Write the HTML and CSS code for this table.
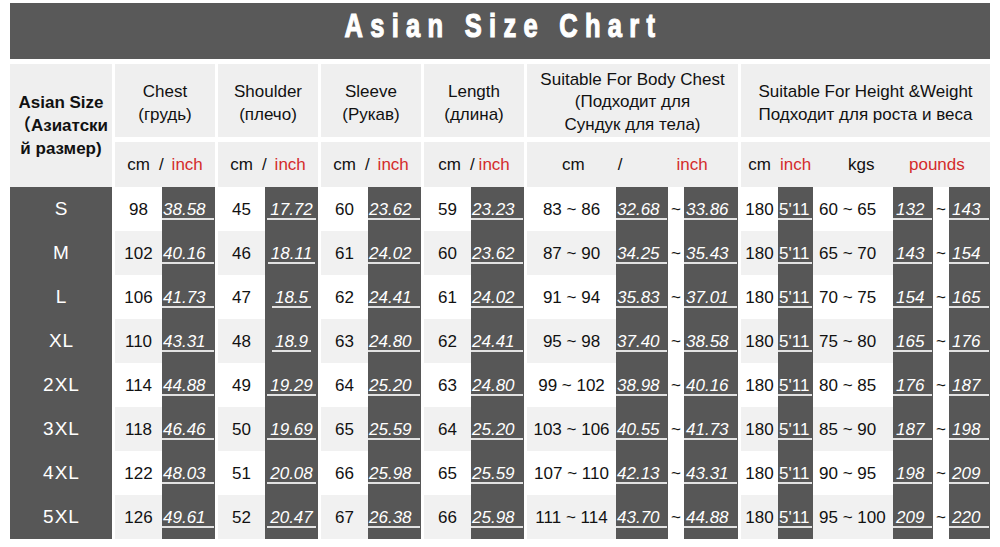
FILE: index.html
```html
<!DOCTYPE html>
<html lang="en">
<head>
<meta charset="utf-8">
<title>Asian Size Chart</title>
<link rel="stylesheet" href="styles.css">
</head>
<body>
<div class="page">
  <div class="title"><span class="title-text">Asian Size Chart</span></div>

  <div class="head">
    <div class="hsize">Asian Size<br>（Азиатски<br>й размер)</div>
    <div class="hgrp std">
      <div class="h1">Chest<br>(грудь)</div>
      <div class="h2"><span>cm</span><span class="sl">/</span><span class="red">inch</span></div>
    </div>
    <div class="hgrp std">
      <div class="h1">Shoulder<br>(плечо)</div>
      <div class="h2"><span>cm</span><span class="sl">/</span><span class="red">inch</span></div>
    </div>
    <div class="hgrp std">
      <div class="h1">Sleeve<br>(Рукав)</div>
      <div class="h2"><span>cm</span><span class="sl">/</span><span class="red">inch</span></div>
    </div>
    <div class="hgrp std">
      <div class="h1">Length<br>(длина)</div>
      <div class="h2"><span>cm</span><span class="sl tight">/</span><span class="red">inch</span></div>
    </div>
    <div class="hgrp bc">
      <div class="h1 three">Suitable For Body Chest<br>(Подходит для<br>Сундук для тела)</div>
      <div class="h2 bc-units"><span class="bu-cm">cm</span><span class="bu-sl">/</span><span class="bu-in red">inch</span></div>
    </div>
    <div class="hgrp hw">
      <div class="h1">Suitable For Height &amp;Weight<br>Подходит для роста и веса</div>
      <div class="h2 hw-units"><span class="hu-cm">cm</span><span class="hu-ft red">inch</span><span class="hu-kg">kgs</span><span class="hu-lb red">pounds</span></div>
    </div>
  </div>

  <div class="rows">
    <div class="row">
      <div class="c size">S</div>
      <div class="grp"><div class="c cm lt">98</div><div class="c in dk"><span class="u">38.58</span></div></div>
      <div class="grp"><div class="c cm lt">45</div><div class="c in dk ctr"><span class="u">17.72</span></div></div>
      <div class="grp"><div class="c cm lt">60</div><div class="c in dk"><span class="u">23.62</span></div></div>
      <div class="grp"><div class="c cm lt">59</div><div class="c in dk"><span class="u">23.23</span></div></div>
      <div class="grp"><div class="c bcm lt">83 ~ 86</div><div class="c bi1 dk"><span class="u">32.68</span></div><div class="c tl">~</div><div class="c bi2 dk"><span class="u">33.86</span></div></div>
      <div class="grp"><div class="c hcm lt">180</div><div class="c hft dk up"><span class="u">5'11</span></div><div class="c kg lt">60 ~ 65</div><div class="c lb1 dk"><span class="u">132</span></div><div class="c tl">~</div><div class="c lb2 dk"><span class="u">143</span></div></div>
    </div>
    <div class="row alt">
      <div class="c size">M</div>
      <div class="grp"><div class="c cm lt">102</div><div class="c in dk"><span class="u">40.16</span></div></div>
      <div class="grp"><div class="c cm lt">46</div><div class="c in dk ctr"><span class="u">18.11</span></div></div>
      <div class="grp"><div class="c cm lt">61</div><div class="c in dk"><span class="u">24.02</span></div></div>
      <div class="grp"><div class="c cm lt">60</div><div class="c in dk"><span class="u">23.62</span></div></div>
      <div class="grp"><div class="c bcm lt">87 ~ 90</div><div class="c bi1 dk"><span class="u">34.25</span></div><div class="c tl">~</div><div class="c bi2 dk"><span class="u">35.43</span></div></div>
      <div class="grp"><div class="c hcm lt">180</div><div class="c hft dk up"><span class="u">5'11</span></div><div class="c kg lt">65 ~ 70</div><div class="c lb1 dk"><span class="u">143</span></div><div class="c tl">~</div><div class="c lb2 dk"><span class="u">154</span></div></div>
    </div>
    <div class="row">
      <div class="c size">L</div>
      <div class="grp"><div class="c cm lt">106</div><div class="c in dk"><span class="u">41.73</span></div></div>
      <div class="grp"><div class="c cm lt">47</div><div class="c in dk ctr"><span class="u">18.5</span></div></div>
      <div class="grp"><div class="c cm lt">62</div><div class="c in dk"><span class="u">24.41</span></div></div>
      <div class="grp"><div class="c cm lt">61</div><div class="c in dk"><span class="u">24.02</span></div></div>
      <div class="grp"><div class="c bcm lt">91 ~ 94</div><div class="c bi1 dk"><span class="u">35.83</span></div><div class="c tl">~</div><div class="c bi2 dk"><span class="u">37.01</span></div></div>
      <div class="grp"><div class="c hcm lt">180</div><div class="c hft dk up"><span class="u">5'11</span></div><div class="c kg lt">70 ~ 75</div><div class="c lb1 dk"><span class="u">154</span></div><div class="c tl">~</div><div class="c lb2 dk"><span class="u">165</span></div></div>
    </div>
    <div class="row alt">
      <div class="c size">XL</div>
      <div class="grp"><div class="c cm lt">110</div><div class="c in dk"><span class="u">43.31</span></div></div>
      <div class="grp"><div class="c cm lt">48</div><div class="c in dk ctr"><span class="u">18.9</span></div></div>
      <div class="grp"><div class="c cm lt">63</div><div class="c in dk"><span class="u">24.80</span></div></div>
      <div class="grp"><div class="c cm lt">62</div><div class="c in dk"><span class="u">24.41</span></div></div>
      <div class="grp"><div class="c bcm lt">95 ~ 98</div><div class="c bi1 dk"><span class="u">37.40</span></div><div class="c tl">~</div><div class="c bi2 dk"><span class="u">38.58</span></div></div>
      <div class="grp"><div class="c hcm lt">180</div><div class="c hft dk up"><span class="u">5'11</span></div><div class="c kg lt">75 ~ 80</div><div class="c lb1 dk"><span class="u">165</span></div><div class="c tl">~</div><div class="c lb2 dk"><span class="u">176</span></div></div>
    </div>
    <div class="row">
      <div class="c size">2XL</div>
      <div class="grp"><div class="c cm lt">114</div><div class="c in dk"><span class="u">44.88</span></div></div>
      <div class="grp"><div class="c cm lt">49</div><div class="c in dk ctr"><span class="u">19.29</span></div></div>
      <div class="grp"><div class="c cm lt">64</div><div class="c in dk"><span class="u">25.20</span></div></div>
      <div class="grp"><div class="c cm lt">63</div><div class="c in dk"><span class="u">24.80</span></div></div>
      <div class="grp"><div class="c bcm lt">99 ~ 102</div><div class="c bi1 dk"><span class="u">38.98</span></div><div class="c tl">~</div><div class="c bi2 dk"><span class="u">40.16</span></div></div>
      <div class="grp"><div class="c hcm lt">180</div><div class="c hft dk up"><span class="u">5'11</span></div><div class="c kg lt">80 ~ 85</div><div class="c lb1 dk"><span class="u">176</span></div><div class="c tl">~</div><div class="c lb2 dk"><span class="u">187</span></div></div>
    </div>
    <div class="row alt">
      <div class="c size">3XL</div>
      <div class="grp"><div class="c cm lt">118</div><div class="c in dk"><span class="u">46.46</span></div></div>
      <div class="grp"><div class="c cm lt">50</div><div class="c in dk ctr"><span class="u">19.69</span></div></div>
      <div class="grp"><div class="c cm lt">65</div><div class="c in dk"><span class="u">25.59</span></div></div>
      <div class="grp"><div class="c cm lt">64</div><div class="c in dk"><span class="u">25.20</span></div></div>
      <div class="grp"><div class="c bcm lt">103 ~ 106</div><div class="c bi1 dk"><span class="u">40.55</span></div><div class="c tl">~</div><div class="c bi2 dk"><span class="u">41.73</span></div></div>
      <div class="grp"><div class="c hcm lt">180</div><div class="c hft dk up"><span class="u">5'11</span></div><div class="c kg lt">85 ~ 90</div><div class="c lb1 dk"><span class="u">187</span></div><div class="c tl">~</div><div class="c lb2 dk"><span class="u">198</span></div></div>
    </div>
    <div class="row">
      <div class="c size">4XL</div>
      <div class="grp"><div class="c cm lt">122</div><div class="c in dk"><span class="u">48.03</span></div></div>
      <div class="grp"><div class="c cm lt">51</div><div class="c in dk ctr"><span class="u">20.08</span></div></div>
      <div class="grp"><div class="c cm lt">66</div><div class="c in dk"><span class="u">25.98</span></div></div>
      <div class="grp"><div class="c cm lt">65</div><div class="c in dk"><span class="u">25.59</span></div></div>
      <div class="grp"><div class="c bcm lt">107 ~ 110</div><div class="c bi1 dk"><span class="u">42.13</span></div><div class="c tl">~</div><div class="c bi2 dk"><span class="u">43.31</span></div></div>
      <div class="grp"><div class="c hcm lt">180</div><div class="c hft dk up"><span class="u">5'11</span></div><div class="c kg lt">90 ~ 95</div><div class="c lb1 dk"><span class="u">198</span></div><div class="c tl">~</div><div class="c lb2 dk"><span class="u">209</span></div></div>
    </div>
    <div class="row alt">
      <div class="c size">5XL</div>
      <div class="grp"><div class="c cm lt">126</div><div class="c in dk"><span class="u">49.61</span></div></div>
      <div class="grp"><div class="c cm lt">52</div><div class="c in dk ctr"><span class="u">20.47</span></div></div>
      <div class="grp"><div class="c cm lt">67</div><div class="c in dk"><span class="u">26.38</span></div></div>
      <div class="grp"><div class="c cm lt">66</div><div class="c in dk"><span class="u">25.98</span></div></div>
      <div class="grp"><div class="c bcm lt">111 ~ 114</div><div class="c bi1 dk"><span class="u">43.70</span></div><div class="c tl">~</div><div class="c bi2 dk"><span class="u">44.88</span></div></div>
      <div class="grp"><div class="c hcm lt">180</div><div class="c hft dk up"><span class="u">5'11</span></div><div class="c kg lt">95 ~ 100</div><div class="c lb1 dk"><span class="u">209</span></div><div class="c tl">~</div><div class="c lb2 dk"><span class="u">220</span></div></div>
    </div>
  </div>
</div>
</body>
</html>
```

FILE: styles.css
```css
html, body {
  margin: 0;
  padding: 0;
  background: #ffffff;
}

body {
  font-family: "Liberation Sans", Arial, "Noto Sans CJK SC", sans-serif;
  color: #111111;
}

.page {
  width: 980px;
  padding: 3px 10px 0 10px;
}

/* ---------- title ---------- */
.title {
  height: 56px;
  background: #595959;
  text-align: center;
  overflow: hidden;
}

.title-text {
  display: inline-block;
  padding-top: 6px;
  padding-left: 9.6px;
  font-weight: bold;
  font-size: 33.5px;
  line-height: 33.5px;
  letter-spacing: 9.6px;
  color: #ffffff;
  -webkit-text-stroke: 1.2px #ffffff;
  transform: scaleX(0.76);
  white-space: nowrap;
}

/* ---------- header ---------- */
.head {
  display: flex;
  gap: 3px;
  margin-top: 5px;
}

.hsize {
  width: 102px;
  height: 123px;
  background: #efefef;
  display: flex;
  align-items: center;
  justify-content: center;
  text-align: center;
  font-weight: bold;
  font-size: 17px;
  line-height: 23px;
}

.hgrp {
  display: flex;
  flex-direction: column;
  gap: 5px;
}

.hgrp.std { width: 100px; }
.hgrp.bc  { width: 211px; }
.hgrp.hw  { width: 249px; }

.h1 {
  height: 73px;
  box-sizing: border-box;
  padding-top: 4px;
  background: #efefef;
  display: flex;
  align-items: center;
  justify-content: center;
  text-align: center;
  font-size: 17px;
  line-height: 23px;
  white-space: nowrap;
}

.h1.three { line-height: 22.5px; }

.h2 {
  height: 45px;
  background: #efefef;
  display: flex;
  align-items: center;
  justify-content: center;
  font-size: 17px;
  line-height: 19px;
  white-space: nowrap;
}

.red { color: #d42b2b; }

.sl { margin: 0 8px 0 9px; }
.sl.tight { margin: 0 4px 0 9px; }

.bc-units { justify-content: flex-start; padding-left: 35px; }
.bu-sl { margin-left: 33px; }
.bu-in { margin-left: 54px; }

.hw-units { justify-content: flex-start; }
.hu-cm { width: 37px; text-align: center; }
.hu-ft { width: 35px; text-align: center; }
.hu-kg { width: 80px; box-sizing: border-box; padding-left: 35px; }
.hu-lb { padding-left: 16px; }

/* ---------- data rows ---------- */
.row {
  display: flex;
  gap: 3px;
  height: 44px;
}

.grp { display: flex; }

.c {
  height: 44px;
  box-sizing: border-box;
  padding-top: 13px;
  font-size: 17px;
  line-height: 19px;
  text-align: center;
  white-space: nowrap;
}

.size {
  width: 102px;
  padding-top: 12px;
  background: #575757;
  color: #ffffff;
  font-size: 19px;
  line-height: 20px;
  letter-spacing: 1px;
  text-indent: 1px;
}

.cm  { width: 47px; }
.in  { width: 53px; }
.bcm { width: 89px; }
.bi1 { width: 52px; }
.bi2 { width: 54px; }
.tl  { width: 16px; }
.hcm { width: 37px; }
.hft { width: 35px; }
.kg  { width: 80px; text-align: left; padding-left: 6px; }
.lb1 { width: 40px; }
.lb2 { width: 41px; }

.row.alt .lt { background: #f1f1f1; }

.dk {
  background: #575757;
  color: #ffffff;
  font-style: italic;
  text-align: left;
  display: flex;
  flex-direction: column;
}

.dk .u {
  display: block;
  margin: 1px 1px 0 0;
  padding-left: 1px;
  line-height: 17px;
  border-bottom: 2px solid #e2e2e2;
}

.dk.ctr .u {
  align-self: center;
  margin: 1px 0 0 0;
  padding: 0 3px;
}

.bi2 .u { padding-left: 2px; }
.lb1 .u, .lb2 .u { padding-left: 3px; }

.dk.up { font-style: normal; }
```
